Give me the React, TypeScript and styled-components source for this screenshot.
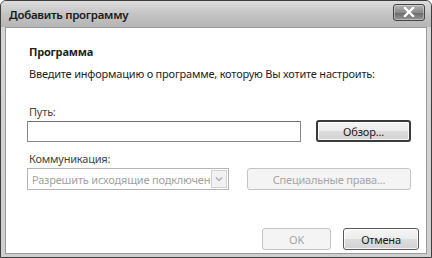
import React from "react";
import styled, { createGlobalStyle } from "styled-components";

const Global = createGlobalStyle`
  html, body { margin: 0; padding: 0; background: #fff; }
  body { width: 432px; height: 258px; overflow: hidden; font-family: "Noto Sans", "Open Sans", sans-serif; }
  * { box-sizing: border-box; }
`;

const Window = styled.div`
  width: 432px;
  height: 258px;
  display: flex;
  flex-direction: column;
  background: linear-gradient(180deg, #c4c4c4 0%, #d6d6d6 12%, #cfcfcf 100%);
  border: 1px solid #3e3e3e;
  border-radius: 6px 6px 0 0;
  padding: 0 4px 3px 4px;
`;

const TitleBar = styled.div`
  height: 26px;
  flex: none;
  display: flex;
  align-items: center;
  justify-content: space-between;
  background: linear-gradient(180deg, #dcdcdc 0%, #c2c2c2 55%, #b6b6b6 100%);
  margin: 0 -4px;
  padding: 0 6px 0 8px;
  border-radius: 5px 5px 0 0;
`;

const Title = styled.span`
  font-size: 11.5px;
  font-weight: 600;
  color: #1a1a1a;
  letter-spacing: -0.3px;
`;

const CloseButton = styled.div`
  width: 32px;
  height: 17px;
  border: 1px solid #444;
  border-radius: 3px;
  background: linear-gradient(180deg, #b4b4b4 0%, #8a8a8a 50%, #6a6a6a 51%, #969696 100%);
  display: flex;
  align-items: center;
  justify-content: center;
  box-shadow: inset 0 0 0 1px rgba(255, 255, 255, 0.35);
  margin-top: -4px;
`;

const Client = styled.div`
  flex: 1;
  background: #fff;
  border: 1px solid #9a9a9a;
  display: flex;
  flex-direction: column;
  padding: 17px 0 0 21px;
  font-size: 11px;
  letter-spacing: -0.2px;
  color: #1e1e1e;
`;

const Heading = styled.div`
  font-weight: 700;
  line-height: 14px;
  margin-left: 2px;
`;

const Text = styled.div<{ $top?: number; $muted?: boolean }>`
  line-height: 14px;
  margin-top: ${(p) => p.$top ?? 0}px;
  margin-left: 2px;
  color: ${(p) => (p.$muted ? "#444" : "#1e1e1e")};
`;

const Row = styled.div<{ $top?: number }>`
  display: flex;
  align-items: center;
  margin-top: ${(p) => p.$top ?? 0}px;
`;

const Input = styled.div`
  width: 274px;
  height: 21px;
  border: 1px solid #8a8a8a;
  border-top-color: #6e6e6e;
  background: #fff;
`;

const Button = styled.div<{ $w: number; $disabled?: boolean; $default?: boolean; $ml?: number }>`
  width: ${(p) => p.$w}px;
  height: 22px;
  margin-left: ${(p) => p.$ml ?? 0}px;
  display: flex;
  align-items: center;
  justify-content: center;
  border-radius: 3px;
  color: ${(p) => (p.$disabled ? "#a6a6a6" : "#1a1a1a")};
  border: ${(p) => (p.$default ? "2px solid #3a3a3a" : p.$disabled ? "1px solid #c4c4c4" : "1px solid #5a5a5a")};
  background: ${(p) =>
    p.$disabled
      ? "#f4f4f4"
      : "linear-gradient(180deg, #f6f6f6 0%, #ececec 48%, #dddddd 52%, #d2d2d2 100%)"};
  box-shadow: ${(p) => (p.$disabled ? "none" : "inset 0 0 0 1px rgba(255,255,255,0.8)")};
`;

const Select = styled.div`
  width: 202px;
  height: 22px;
  border: 1px solid #b4b4b4;
  background: #fff;
  display: flex;
  align-items: center;
  padding-left: 4px;
  color: #a2a2a2;
  white-space: nowrap;
`;

const SelectText = styled.span`
  flex: 1;
`;

const Arrow = styled.div`
  width: 16px;
  height: 18px;
  margin-right: 1px;
  border: 1px solid #d0d0d0;
  background: #f2f2f2;
  display: flex;
  align-items: center;
  justify-content: center;
  flex: none;
`;

const Footer = styled.div`
  margin-top: auto;
  margin-bottom: 3px;
  display: flex;
  justify-content: flex-end;
  padding-right: 7px;
  gap: 12px;
`;

export default function App() {
  return (
    <>
      <Global />
      <Window>
        <TitleBar>
          <Title>Добавить программу</Title>
          <CloseButton>
            <svg width="12" height="10" viewBox="0 0 12 10">
              <path d="M2 1 L10 9 M10 1 L2 9" stroke="#fff" strokeWidth="2.4" strokeLinecap="square" />
            </svg>
          </CloseButton>
        </TitleBar>
        <Client>
          <Heading>Программа</Heading>
          <Text $top={8}>Введите информацию о программе, которую Вы хотите настроить:</Text>
          <Text $top={24} $muted>Путь:</Text>
          <Row $top={1}>
            <Input />
            <Button $w={95} $default $ml={15}>Обзор...</Button>
          </Row>
          <Text $top={10} $muted>Коммуникация:</Text>
          <Row $top={2}>
            <Select>
              <SelectText>Разрешить исходящие подключен</SelectText>
              <Arrow>
                <svg width="8" height="6" viewBox="0 0 8 6">
                  <path d="M1 1.5 L4 4.5 L7 1.5" stroke="#b0b0b0" strokeWidth="1.5" fill="none" />
                </svg>
              </Arrow>
            </Select>
            <Button $w={164} $disabled $ml={18}>Специальные права...</Button>
          </Row>
          <Footer>
            <Button $w={69} $disabled>OK</Button>
            <Button $w={76}>Отмена</Button>
          </Footer>
        </Client>
      </Window>
    </>
  );
}
